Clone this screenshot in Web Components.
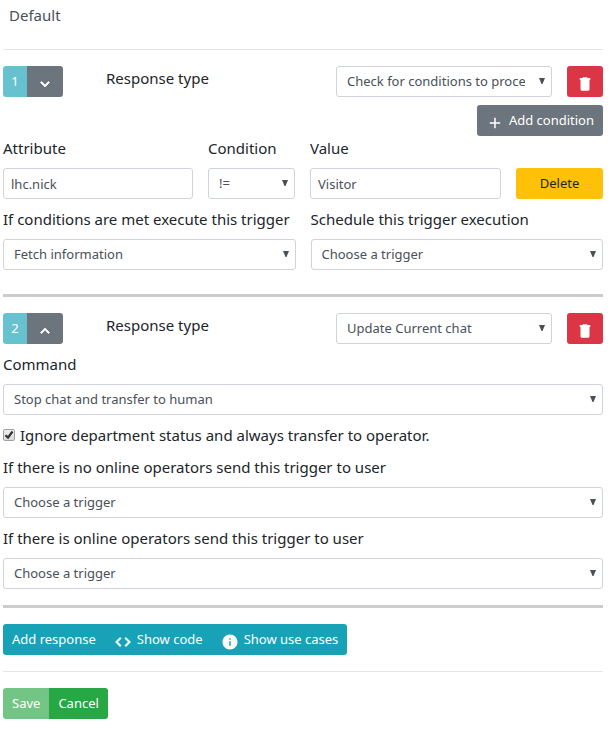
<!DOCTYPE html>
<html lang="en">
<head>
<meta charset="utf-8">
<title>Trigger editor</title>
<style>
  body {
    margin: 0;
    padding: 3px 8px 10px 3px;
    background: #fff;
    color: #212529;
    font-family: "Noto Sans", "Open Sans", sans-serif;
    font-size: 15px;
    line-height: 24px;
  }
</style>
</head>
<body>
<trigger-editor></trigger-editor>

<script>
const ICONS = {
  down: 'M7.41 8.59 12 13.17l4.59-4.58L18 10l-6 6-6-6z',
  up: 'M7.41 15.41 12 10.83l4.59 4.58L18 14l-6-6-6 6z',
  trash: 'M6 6v13c0 1.1.9 2 2 2h8c1.1 0 2-.9 2-2V6zM19 4h-3.500l-1-1h-5l-1 1H5v2.500h14z',
  plus: 'M19 13h-6v6h-2v-6H5v-2h6V5h2v6h6z',
  code: 'M9.400 16.600 4.800 12l4.600-4.600L8 6l-6 6 6 6zM14.600 16.600 19.200 12l-4.600-4.600L16 6l6 6-6 6z',
  info: 'M12 2C6.480 2 2 6.480 2 12s4.480 10 10 10 10-4.480 10-10S17.520 2 12 2zm1 15h-2v-6h2zm0-8h-2V7h2z'
};

const CONTROL = `
  * { box-sizing: border-box; }
  label { display: block; }
  input, select {
    display: block;
    width: 100%;
    min-width: 0;
    height: 31px;
    margin: 0;
    border: 1px solid #ced4da;
    border-radius: 3px;
    background-color: #fff;
    color: #495057;
    font: inherit;
    font-size: 13px;
    line-height: 21px;
    padding: 4px 7px;
  }
  select {
    appearance: none;
    padding: 4px 26px 4px 10px;
    background-image: url("data:image/svg+xml,%3Csvg xmlns='http://www.w3.org/2000/svg' width='6' height='6'%3E%3Cpath d='M0 0h6L3.500 6h-1z' fill='%23495057'/%3E%3C/svg%3E");
    background-repeat: no-repeat;
    background-position: right 6px top 11px;
  }
`;

function define(name, build) {
  customElements.define(name, class extends HTMLElement {
    connectedCallback() {
      if (this.shadowRoot) return;
      this.attachShadow({ mode: 'open' }).innerHTML = build(n => this.getAttribute(n) || '', this);
    }
  });
}

define('ui-icon', get => `
  <style>
    :host { display: block; width: 18px; height: 18px; margin-top: 4px; }
    svg { display: block; width: 18px; height: 18px; fill: currentColor; }
    :host([name=down]) svg, :host([name=up]) svg, :host([name=code]) svg { stroke: currentColor; stroke-width: 1; }
  </style>
  <svg viewBox="0 0 24 24" aria-hidden="true"><path d="${ICONS[get('name')]}"/></svg>`);

define('ui-button', (get, el) => `
  <style>
    :host {
      display: block;
      --bg: #6c757d;
      --fg: #fff;
      --radius: 3px;
    }
    :host([tone=danger]) { --bg: #dc3545; }
    :host([tone=warning]) { --bg: #ffc107; --fg: #212529; }
    :host([tone=info]) { --bg: #17a2b8; }
    :host([tone=success]) { --bg: #28a745; }
    :host([join=start]) { --radius: 3px 0 0 3px; }
    :host([join=middle]) { --radius: 0; }
    :host([join=end]) { --radius: 0 3px 3px 0; }
    button {
      display: flex;
      align-items: center;
      justify-content: center;
      gap: 5px;
      width: 100%;
      height: 31px;
      margin: 0;
      padding: 0 9px;
      border: 0;
      border-radius: var(--radius);
      background: var(--bg);
      color: var(--fg);
      font: inherit;
      font-size: 13px;
      line-height: 21px;
      white-space: nowrap;
    }
    button:disabled { opacity: .65; }
  </style>
  <button type="button" ${get('hint') ? `aria-label="${get('hint')}"` : ''} ${el.hasAttribute('disabled') ? 'disabled' : ''}>
    ${get('icon') ? `<ui-icon name="${get('icon')}"></ui-icon>` : ''}${el.textContent ? '<slot></slot>' : ''}
  </button>`);

define('ui-group', () => `
  <style>:host { display: flex; }</style><slot></slot>`);

define('ui-text', get => `
  <style>${CONTROL}
    :host { display: block; min-width: 0; }
    label { margin-bottom: 8px; }
  </style>
  <label for="f">${get('label')}</label>
  <input id="f" type="text" value="${get('value')}">`);

define('ui-select', get => `
  <style>${CONTROL}
    :host { display: block; min-width: 0; }
    label { margin-bottom: 8px; white-space: nowrap; }
  </style>
  <label for="f">${get('label')}</label>
  <select id="f"><option>${get('value')}</option></select>`);

define('ui-check', get => `
  <style>
    :host { display: flex; align-items: center; gap: 5px; }
    input {
      appearance: none;
      flex: none;
      box-sizing: border-box;
      width: 12px;
      height: 12px;
      margin: 0;
      border: 1px solid #a0a0a0;
      border-radius: 2px;
      background: linear-gradient(#eee, #dcdcdc);
    }
    input:checked {
      background: url("data:image/svg+xml,%3Csvg xmlns='http://www.w3.org/2000/svg' width='10' height='10'%3E%3Cpath d='M1.500 5.200 4 7.600 8.500 1.500' fill='none' stroke='%23333' stroke-width='2.200'/%3E%3C/svg%3E") center no-repeat, linear-gradient(#eee, #dcdcdc);
    }
  </style>
  <input id="c" type="checkbox" checked>
  <label for="c">${get('label')}</label>`);

define('ui-rule', () => `
  <style>
    :host { display: block; height: 1px; background: #e5e5e5; }
    :host([thick]) { height: 3px; background: #ccc; }
  </style>`);

define('response-head', get => `
  <style>${CONTROL}
    :host {
      display: grid;
      grid-template-columns: minmax(60px, 88fr) 215fr 216fr 36px;
      gap: 15px;
      align-items: start;
    }
    .number { width: 24px; }
  </style>
  <ui-group>
    <ui-button class="number" tone="info" join="start" disabled>${get('number')}</ui-button>
    <ui-button join="end" icon="${get('move')}" hint="Move ${get('move')}"></ui-button>
  </ui-group>
  <label for="type">Response type</label>
  <select id="type"><option>${get('value')}</option></select>
  <ui-button tone="danger" icon="trash" hint="Remove response"></ui-button>`);

define('response-card', () => `
  <style>
    :host { display: flex; flex-direction: column; gap: 8px; }
  </style>
  <slot></slot>`);

define('condition-row', () => `
  <style>
    :host { display: flex; flex-direction: column; }
    .add { align-self: flex-end; }
    .fields {
      display: grid;
      grid-template-columns: 190fr 87fr 191fr 87fr;
      gap: 15px;
      align-items: end;
    }
  </style>
  <ui-button class="add" icon="plus">Add condition</ui-button>
  <div class="fields">
    <ui-text label="Attribute" value="lhc.nick"></ui-text>
    <ui-select label="Condition" value="!="></ui-select>
    <ui-text label="Value" value="Visitor"></ui-text>
    <ui-button tone="warning">Delete</ui-button>
  </div>`);

define('field-pair', () => `
  <style>
    :host { display: grid; grid-template-columns: 1fr 1fr; gap: 15px; margin-bottom: 8px; }
  </style>
  <slot></slot>`);

define('trigger-editor', () => `
  <style>
    :host { display: flex; flex-direction: column; gap: 16px; }
    h1 {
      margin: 0;
      padding: 0 6px 6px;
      color: #495057;
      font-size: 15px;
      font-weight: 400;
      line-height: 24px;
    }
  </style>
  <h1>Default</h1>
  <ui-rule></ui-rule>
  <response-card>
    <response-head number="1" move="down" value="Check for conditions to proceed"></response-head>
    <condition-row></condition-row>
    <field-pair>
      <ui-select label="If conditions are met execute this trigger" value="Fetch information"></ui-select>
      <ui-select label="Schedule this trigger execution" value="Choose a trigger"></ui-select>
    </field-pair>
  </response-card>
  <ui-rule thick></ui-rule>
  <response-card>
    <response-head number="2" move="up" value="Update Current chat"></response-head>
    <ui-select label="Command" value="Stop chat and transfer to human"></ui-select>
    <ui-check label="Ignore department status and always transfer to operator."></ui-check>
    <ui-select label="If there is no online operators send this trigger to user" value="Choose a trigger"></ui-select>
    <ui-select label="If there is online operators send this trigger to user" value="Choose a trigger"></ui-select>
  </response-card>
  <ui-rule thick></ui-rule>
  <ui-group>
    <ui-button tone="info" join="start">Add response</ui-button>
    <ui-button tone="info" join="middle" icon="code">Show code</ui-button>
    <ui-button tone="info" join="end" icon="info">Show use cases</ui-button>
  </ui-group>
  <ui-rule></ui-rule>
  <ui-group>
    <ui-button tone="success" join="start" disabled>Save</ui-button>
    <ui-button tone="success" join="end">Cancel</ui-button>
  </ui-group>`);
</script>
</body>
</html>
